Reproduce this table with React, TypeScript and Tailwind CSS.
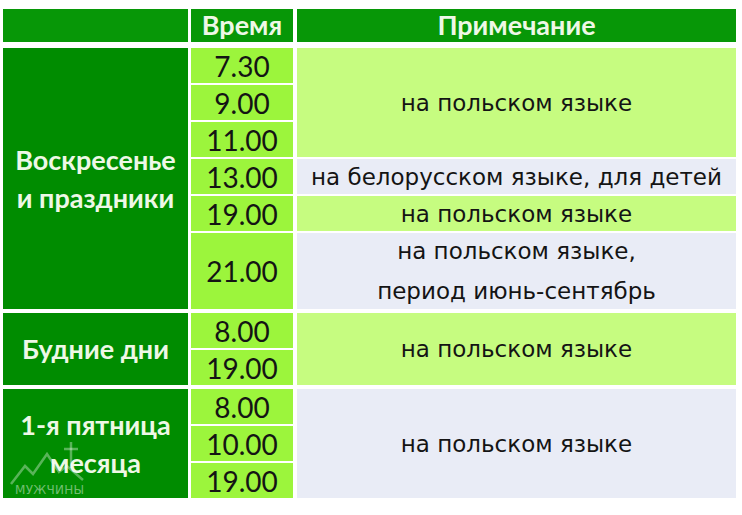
const calibri = "font-['Lato','Open_Sans',sans-serif]";
const verdana = "font-['DejaVu_Sans','Verdana',sans-serif]";

type Note = { text: string[]; rows: number; tone: "green" | "lilac" };

const NoteCell = ({ note }: { note: Note }) => {
  const h = note.rows * 35 + (note.rows - 1) * 2;
  return (
    <div
      className={`flex flex-col items-center justify-center text-[23px] leading-[40px] text-[#141414] ${verdana} ${
        note.tone === "green" ? "bg-[#c6fc80]" : "bg-[#e9ecf6]"
      }`}
      style={{ height: h }}
    >
      {note.text.map((t) => (
        <span key={t}>{t}</span>
      ))}
    </div>
  );
};

const TimeCell = ({ t, rows = 1 }: { t: string; rows?: number }) => (
  <div
    className={`flex items-center justify-center bg-[#9cf53c] text-[28px] text-[#141414] ${calibri}`}
    style={{ height: rows * 35 + (rows - 1) * 2 + (rows > 1 ? 4 : 0) }}
  >
    {t}
  </div>
);

const Group = ({
  label,
  times,
  notes,
}: {
  label: string[];
  times: { t: string; rows?: number }[];
  notes: Note[];
}) => (
  <div className="flex gap-[3px]">
    <div
      className={`relative flex w-[185px] flex-col items-center justify-center bg-[#008c00] text-[27px] font-bold leading-[38px] text-[#eef8e6] ${calibri}`}
    >
      {label.map((l) => (
        <span key={l}>{l}</span>
      ))}
    </div>
    <div className="flex w-[102px] flex-col gap-[2px]">
      {times.map((x) => (
        <TimeCell key={x.t} t={x.t} rows={x.rows} />
      ))}
    </div>
    <div className="ml-[1px] flex w-[439px] flex-col gap-[2px]">
      {notes.map((n, i) => (
        <NoteCell key={i} note={n} />
      ))}
    </div>
  </div>
);

const Watermark = () => (
  <div className="pointer-events-none absolute bottom-[2px] left-[6px] text-white/35">
    <svg width="84" height="54" viewBox="0 0 84 54" fill="none" stroke="currentColor" strokeWidth="2.5">
      <polyline points="2,44 16,26 24,34 38,14 50,32 58,26 74,40" />
      <line x1="62" y1="2" x2="62" y2="28" />
      <line x1="55" y1="9" x2="69" y2="9" />
    </svg>
    <div className={`-mt-[10px] ml-[6px] text-[12px] leading-none tracking-wide text-white/45 ${verdana}`}>МУЖЧИНЫ</div>
  </div>
);

export default function App() {
  return (
    <div className="h-[515px] w-[742px] bg-white px-[3px] pt-[9px]">
      <div className={`flex h-[33px] gap-[3px] text-[27px] font-bold text-[#eef8e6] ${calibri}`}>
        <div className="w-[185px] bg-[#079707]" />
        <div className="flex w-[102px] items-center justify-center bg-[#079707]">Время</div>
        <div className="ml-[1px] flex w-[439px] items-center justify-center bg-[#079707]">Примечание</div>
      </div>
      <div className="mt-[6px] flex flex-col gap-[4px]">
        <Group
          label={["Воскресенье", "и праздники"]}
          times={[{ t: "7.30" }, { t: "9.00" }, { t: "11.00" }, { t: "13.00" }, { t: "19.00" }, { t: "21.00", rows: 2 }]}
          notes={[
            { text: ["на польском языке"], rows: 3, tone: "green" },
            { text: ["на белорусском языке, для детей"], rows: 1, tone: "lilac" },
            { text: ["на польском языке"], rows: 1, tone: "green" },
            { text: ["на польском языке,", "период июнь-сентябрь"], rows: 2.11, tone: "lilac" },
          ]}
        />
        <Group
          label={["Будние дни"]}
          times={[{ t: "8.00" }, { t: "19.00" }]}
          notes={[{ text: ["на польском языке"], rows: 2, tone: "green" }]}
        />
        <div className="relative">
          <Group
            label={["1-я пятница", "месяца"]}
            times={[{ t: "8.00" }, { t: "10.00" }, { t: "19.00" }]}
            notes={[{ text: ["на польском языке"], rows: 3, tone: "lilac" }]}
          />
          <Watermark />
        </div>
      </div>
    </div>
  );
}
